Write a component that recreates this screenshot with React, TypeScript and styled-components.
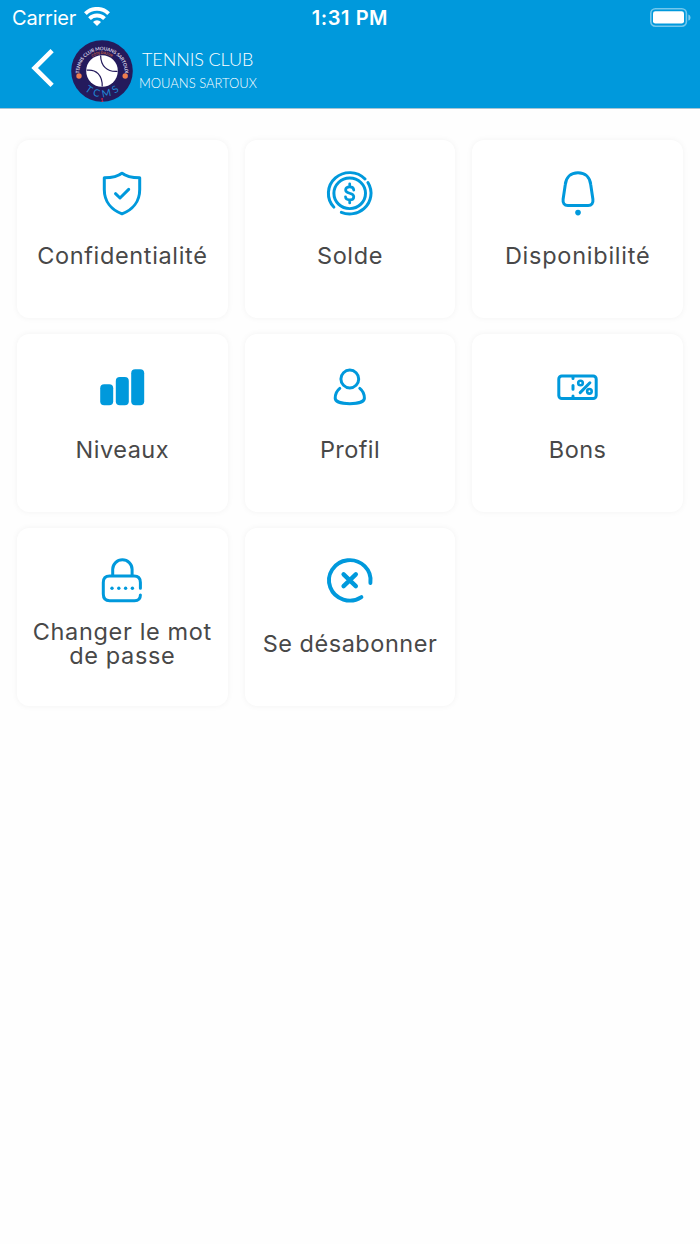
import type { ReactNode } from "react";
import styled, { createGlobalStyle } from "styled-components";

const BLUE = "#0099dc";

const GlobalStyle = createGlobalStyle`
  body {
    margin: 0;
    background-color: #fefefe;
    font-family: Inter, "Open Sans", sans-serif;
  }
`;

const pinDots = [0, 1, 2, 3];

const icons: Record<string, ReactNode> = {
  shield: (
    <>
      <path d="M32 13.2 C28 16.6 22.5 17.8 14.3 17.8 V29.4 C14.3 41.4 21.5 49.9 32 53.8 C42.5 49.9 49.7 41.4 49.7 29.4 V17.8 C41.5 17.8 36 16.6 32 13.2Z" />
      <path d="M25.5 33.7 L30 38 L38.7 29.4" />
    </>
  ),
  coin: (
    <g transform="translate(31.7 33.3) scale(1 0.97)">
      <circle r="15.8" />
      <circle r="21.3" pathLength="360" strokeDasharray="178 13 144 25" transform="rotate(138)" />
      <path
        strokeWidth="2.7"
        d="M4.1 -3.3 C3.9 -5.9 2.1 -6.6 0 -6.6 C-2.4 -6.6 -4.1 -5.4 -4.1 -3.3 C-4.1 1.1 4.1 -1.1 4.1 3.5 C4.1 5.6 2.4 6.8 0 6.8 C-2.4 6.8 -4.1 5.7 -4.2 3.6 M0 -9.8 V-7 M0 7.2 V10"
      />
    </g>
  ),
  bell: (
    <>
      <path d="M32 12.7 C24.5 12.7 20 17.7 19.3 24.5 L17.1 39.3 C16.6 43 18.4 45.5 21.8 45.5 H42.2 C45.6 45.5 47.4 43 46.9 39.3 L44.7 24.5 C44 17.7 39.5 12.7 32 12.7Z" />
      <circle cx="32" cy="52.6" r="2.8" fill={BLUE} stroke="none" />
    </>
  ),
  bars: (
    <g fill={BLUE} stroke="none">
      <rect x="10.2" y="30.2" width="13" height="21" rx="4" />
      <rect x="25.8" y="22.9" width="13" height="28.3" rx="4" />
      <rect x="41.2" y="15.2" width="13" height="36" rx="4" />
    </g>
  ),
  person: (
    <>
      <circle cx="31.8" cy="25" r="8.9" />
      <path d="M21.8 34.4 C18.6 36.9 17.2 39.8 17.2 44.3 C17.2 47.7 23.3 49.7 31.8 49.7 C40.3 49.7 46.4 47.7 46.4 44.3 C46.4 39.8 45 36.9 41.8 34.4" />
    </>
  ),
  voucher: (
    <>
      <rect x="12.8" y="22" width="37.4" height="22.6" rx="3" />
      <path d="M27 22.4 V24.4 M27 31.4 V35.2 M27 42 V44" />
      <path d="M34.2 38.6 L43.9 28.8" />
      <g strokeWidth="2.6">
        <circle cx="34.5" cy="29" r="2.3" />
        <circle cx="43.4" cy="37.3" r="2.3" />
      </g>
    </>
  ),
  lock: (
    <>
      <path d="M50.4 40.2 V34.5 C50.4 30.2 48.4 28 44 28 H19.7 C15.3 28 13.3 30.2 13.3 34.5 V46 C13.3 50.3 15.3 52.7 19.7 52.7 H44.5 C48.3 52.7 50.4 50.6 50.4 47" />
      <path d="M22.7 27.5 V21.3 A9.7 9.5 0 0 1 42.1 21.3 V27.5" />
      {pinDots.map((i) => (
        <circle key={i} cx={22 + i * 6.8} cy="40.2" r="1.7" fill={BLUE} stroke="none" />
      ))}
    </>
  ),
  cancel: (
    <g strokeWidth="3.9">
      <path d="M52.4 35 A20.8 20.2 0 1 0 43.4 49.1" />
      <path d="M25.6 26.4 L37.8 38.2 M37.8 26.4 L25.6 38.2" strokeWidth="4.4" />
    </g>
  ),
};

const tiles = [
  { label: "Confidentialité", icon: "shield", spacing: 0.65 },
  { label: "Solde", icon: "coin", spacing: 0.6 },
  { label: "Disponibilité", icon: "bell", spacing: 0.75 },
  { label: "Niveaux", icon: "bars", spacing: 0.5 },
  { label: "Profil", icon: "person", spacing: 0.4 },
  { label: "Bons", icon: "voucher", spacing: 0.5 },
  { label: "Changer le mot de passe", icon: "lock", spacing: 0.65 },
  { label: "Se désabonner", icon: "cancel", spacing: 0.52 },
];

function ClubLogo() {
  return (
    <svg width="62" height="62" viewBox="-31 -31 62 62">
      <defs>
        <path id="ring-top" d="M-22.8 2 A22.8 22.8 0 0 1 22.8 2" />
        <path id="ring-inner" d="M-17 0 A17 17 0 0 1 17 0" />
        <path id="ring-bottom" d="M-26 0 A26 26 0 0 0 26 0" />
      </defs>
      <circle r="30.8" fill="#241a5c" />
      <g fontFamily="Lato, sans-serif" textAnchor="middle">
        <text fontSize="4.8" fontWeight="700" fill="#d6d3e6">
          <textPath href="#ring-top" startOffset="50%" textLength="72">
            TENNIS CLUB MOUANS SARTOUX
          </textPath>
        </text>
        <text fontSize="3.4" fontWeight="700" fill="#cf6340">
          <textPath href="#ring-inner" startOffset="50%" textLength="21">
            CÔTE D'AZUR
          </textPath>
        </text>
        <text fontSize="10" fontWeight="400" fill="#1f8ad6">
          <textPath href="#ring-bottom" startOffset="50%" textLength="38">
            TCMS
          </textPath>
        </text>
        <text x="-0.3" y="30.6" fontSize="5.4" fontWeight="900" fill="#d3263c">
          1
        </text>
      </g>
      <circle r="15.8" fill="#fff" />
      <path
        d="M-15.3 -0.8 C-6 -2 0.6 4 0.2 15.6 M-1.4 -15.5 C-1.2 -5 5 1.2 15.5 0.4"
        fill="none"
        stroke="#241a5c"
        strokeWidth="1.2"
      />
      <circle cx="-23" cy="5" r="2.7" fill="#ee7d4e" />
      <circle cx="23.2" cy="5" r="2.7" fill="#ee7d4e" />
    </svg>
  );
}

function App() {
  return (
    <Screen>
      <GlobalStyle />
      <Header>
        <StatusBar>
          <Carrier>
            <span>Carrier</span>
            <svg width="26" height="19" viewBox="0 0 26 19" fill="none" stroke="#fff" strokeWidth="3.9">
              <path d="M1.4 6.6 A16.6 16.6 0 0 1 24.6 6.6" />
              <path d="M5.5 11.6 A10.8 10.8 0 0 1 20.5 11.6" />
              <path d="M13 19 L9 15 A5.7 5.7 0 0 1 17 15Z" fill="#fff" stroke="none" />
            </svg>
          </Carrier>
          <Clock>1:31 PM</Clock>
          <svg width="42" height="20" viewBox="0 0 42 20">
            <rect x="0.8" y="0.8" width="35.6" height="17.4" rx="4.6" fill="none" stroke="#fff" strokeOpacity="0.45" strokeWidth="1.6" />
            <rect x="3" y="3.2" width="31" height="12.4" rx="2.4" fill="#fff" />
            <path d="M38.4 6.4 C41.2 7.6 41.2 11.4 38.4 12.6Z" fill="#fff" fillOpacity="0.5" />
          </svg>
        </StatusBar>
        <NavBar>
          <BackButton aria-label="Retour">
            <svg width="26" height="42" viewBox="0 0 26 42" fill="none" stroke="#fff" strokeWidth="4.6">
              <path d="M22.1 3.6 L4.6 21 L22.1 38.4" />
            </svg>
          </BackButton>
          <ClubLogo />
          <ClubName>
            <ClubTitle>TENNIS CLUB</ClubTitle>
            <ClubTown>MOUANS SARTOUX</ClubTown>
          </ClubName>
        </NavBar>
      </Header>
      <Grid>
        {tiles.map((tile) => (
          <Tile key={tile.label}>
            <TileIcon viewBox="0 0 64 64">{icons[tile.icon]}</TileIcon>
            <TileLabel $spacing={tile.spacing}>{tile.label}</TileLabel>
          </Tile>
        ))}
      </Grid>
    </Screen>
  );
}

const Screen = styled.div`
  width: 700px;
  height: 1244px;
  overflow: hidden;
  background-color: #fefefe;
`;

const Header = styled.header`
  height: 108px;
  box-sizing: border-box;
  color: #fff;
  background-color: ${BLUE};
  box-shadow: 0 1px 0 #a6c4d3;
`;

const StatusBar = styled.div`
  display: grid;
  grid-template-columns: 1fr auto 1fr;
  align-items: center;
  height: 35px;
  padding: 0 8px 0 12px;

  > svg {
    justify-self: end;
  }
`;

const Carrier = styled.div`
  display: flex;
  align-items: center;
  gap: 8px;
  font-size: 20px;
  letter-spacing: -0.2px;

  > svg {
    margin-top: -2px;
  }
`;

const Clock = styled.div`
  margin-left: -4px;
  font-size: 20px;
  font-weight: 600;
  letter-spacing: 0.55px;
`;

const NavBar = styled.div`
  display: flex;
  align-items: center;
  height: 72px;
  padding-left: 30px;
`;

const BackButton = styled.button`
  display: flex;
  width: 41px;
  margin-top: -6px;
  padding: 0;
  border: 0;
  background: none;
`;

const ClubName = styled.div`
  display: flex;
  flex-direction: column;
  margin: -1px 0 0 6px;
  font-family: Lato, sans-serif;
  font-weight: 300;
`;

const ClubTitle = styled.div`
  padding-left: 3px;
  font-size: 18px;
  line-height: 24px;
  letter-spacing: -0.1px;
`;

const ClubTown = styled.div`
  font-size: 13px;
  line-height: 24px;
`;

const Grid = styled.main`
  display: grid;
  grid-template-columns: repeat(3, 1fr);
  grid-auto-rows: 178px;
  gap: 16px 17px;
  padding: 32px 17px;
`;

const Tile = styled.section`
  display: flex;
  flex-direction: column;
  align-items: center;
  border-radius: 12px;
  background-color: #fff;
  box-shadow: 0 0 6px rgba(0, 0, 0, 0.05);
`;

const TileIcon = styled.svg`
  width: 64px;
  height: 64px;
  margin-top: 20px;
  fill: none;
  stroke: ${BLUE};
  stroke-width: 3;
  stroke-linecap: round;
  stroke-linejoin: round;
`;

const TileLabel = styled.div<{ $spacing: number }>`
  display: flex;
  align-items: center;
  height: 63px;
  width: 196px;
  justify-content: center;
  text-align: center;
  color: #484848;
  font-size: 23.5px;
  line-height: 24px;
  letter-spacing: ${(p) => p.$spacing}px;
`;

export default App;
